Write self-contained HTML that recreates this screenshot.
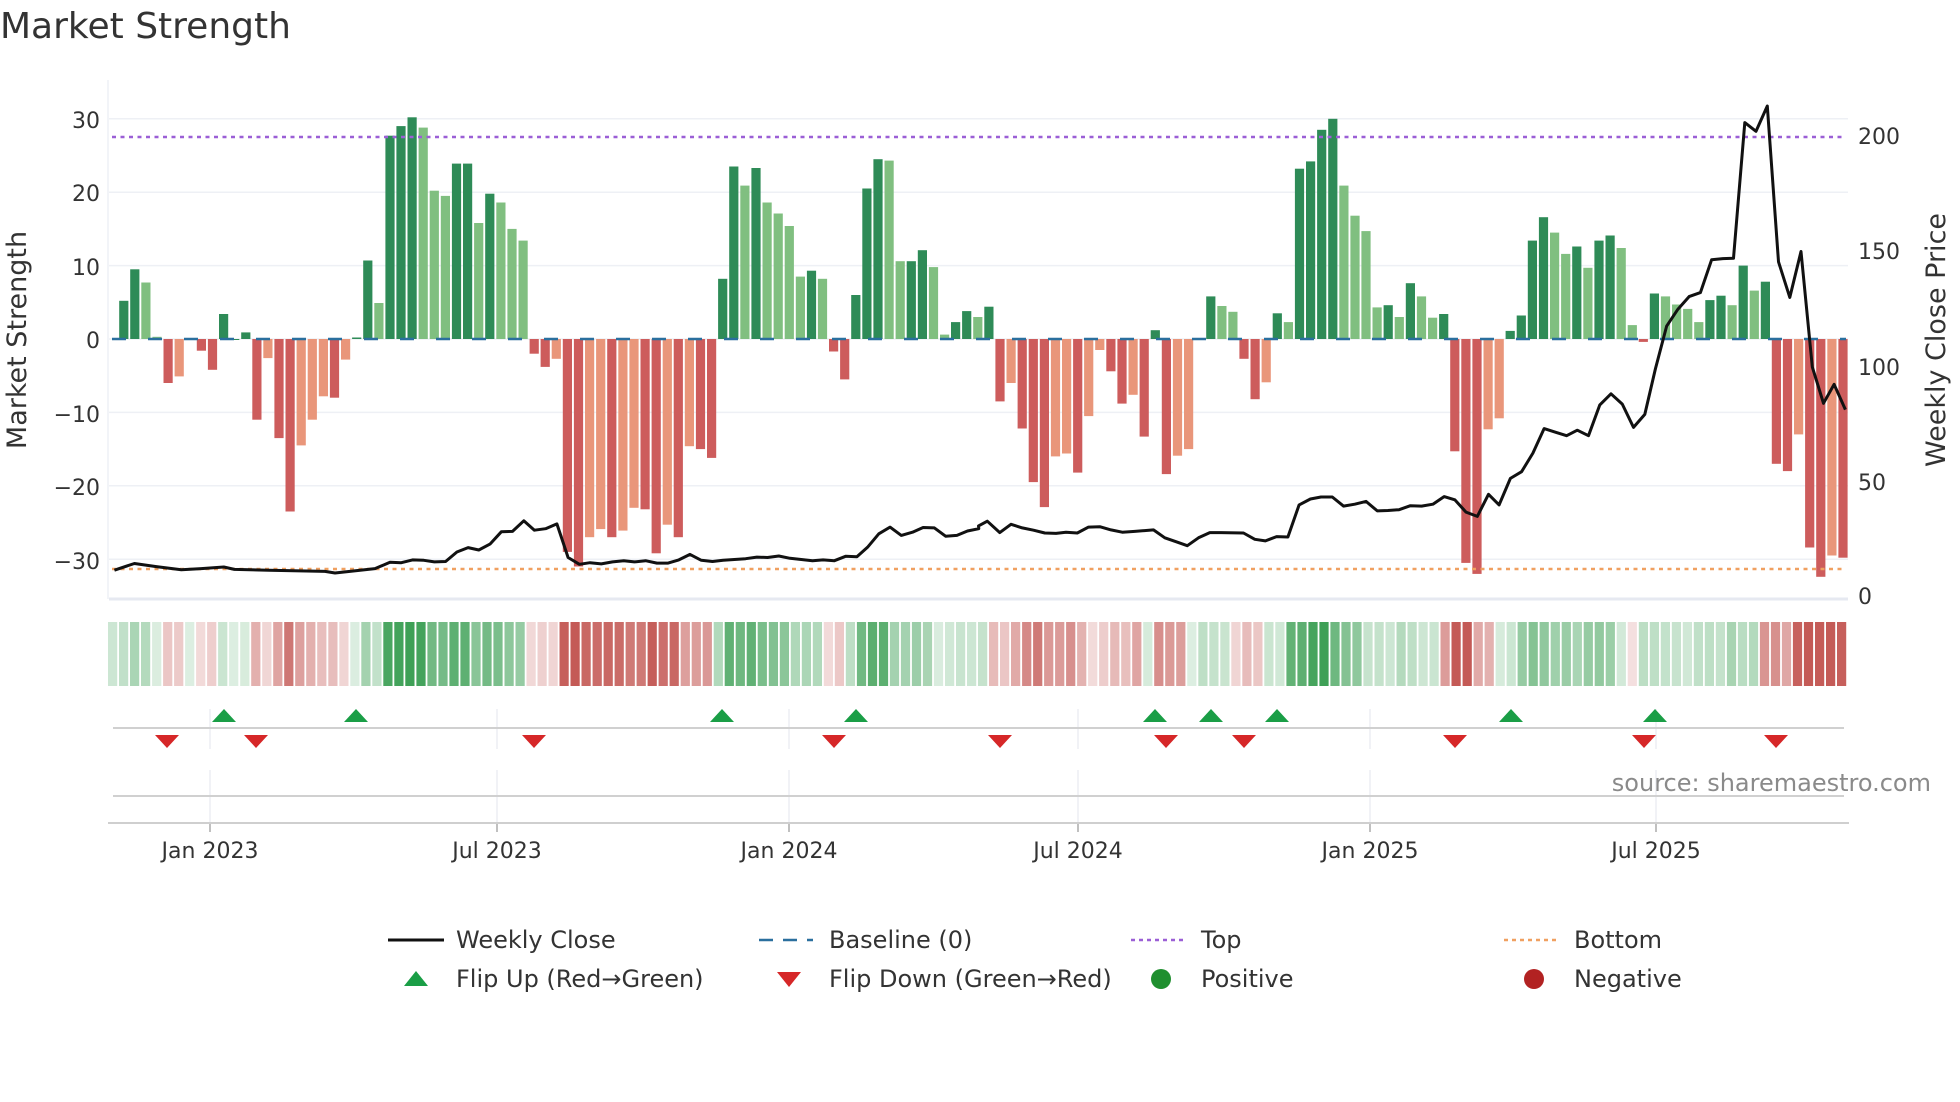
<!DOCTYPE html>
<html><head><meta charset="utf-8"><style>
html,body{margin:0;padding:0;background:#fff;width:1960px;height:1102px;overflow:hidden}
svg{display:block}
text{font-family:"DejaVu Sans","Liberation Sans",sans-serif}
</style></head><body>
<svg id="s" width="1960" height="1102" viewBox="0 0 1960 1102" xmlns="http://www.w3.org/2000/svg">
<text x="0" y="38" font-size="36" fill="#333">Market Strength</text>
<g id="grid"></g>
<g id="bars"></g>
<g id="over"></g>
<g font-size="22" fill="#333">
<text x="100" y="128" text-anchor="end">30</text>
<text x="100" y="201" text-anchor="end">20</text>
<text x="100" y="275" text-anchor="end">10</text>
<text x="100" y="348" text-anchor="end">0</text>
<text x="100" y="422" text-anchor="end">−10</text>
<text x="100" y="495" text-anchor="end">−20</text>
<text x="100" y="569" text-anchor="end">−30</text>
<text x="1858" y="144">200</text>
<text x="1858" y="259">150</text>
<text x="1858" y="375">100</text>
<text x="1858" y="490">50</text>
<text x="1858" y="604">0</text>
</g>
<text transform="translate(26,340) rotate(-90)" text-anchor="middle" font-size="27" fill="#333">Market Strength</text>
<text transform="translate(1945,340) rotate(-90)" text-anchor="middle" font-size="27" fill="#333">Weekly Close Price</text>
<g id="strip"></g>
<g id="marks"></g>
<g font-size="22" fill="#333" text-anchor="middle">
<text x="210" y="858">Jan 2023</text>
<text x="497" y="858">Jul 2023</text>
<text x="789" y="858">Jan 2024</text>
<text x="1078" y="858">Jul 2024</text>
<text x="1370" y="858">Jan 2025</text>
<text x="1656" y="858">Jul 2025</text>
</g>
<text x="1931" y="791" text-anchor="end" font-size="24" fill="#8a8a8a">source: sharemaestro.com</text>
<g font-size="24" fill="#333">
<line x1="388" y1="940" x2="444" y2="940" stroke="#111" stroke-width="3"/>
<text x="456" y="948">Weekly Close</text>
<line x1="759" y1="940" x2="813" y2="940" stroke="#2a6f9e" stroke-width="2.5" stroke-dasharray="14,10"/>
<text x="829" y="948">Baseline (0)</text>
<line x1="1131" y1="940" x2="1185" y2="940" stroke="#9b5fd6" stroke-width="2.5" stroke-dasharray="4,4"/>
<text x="1201" y="948">Top</text>
<line x1="1504" y1="940" x2="1559" y2="940" stroke="#f0a060" stroke-width="2.5" stroke-dasharray="4,4"/>
<text x="1574" y="948">Bottom</text>
<polygon points="404,986 428,986 416,971" fill="#1a9e46"/>
<text x="456" y="987">Flip Up (Red→Green)</text>
<polygon points="777,972 801,972 789,987" fill="#d62728"/>
<text x="829" y="987">Flip Down (Green→Red)</text>
<circle cx="1161" cy="979" r="10" fill="#1f8f2f"/>
<text x="1201" y="987">Positive</text>
<circle cx="1534" cy="979" r="10" fill="#b22222"/>
<text x="1574" y="987">Negative</text>
</g>
</svg>
<script>
var NS="http://www.w3.org/2000/svg";
function el(p,t,a){var e=document.createElementNS(NS,t);for(var k in a)e.setAttribute(k,a[k]);document.getElementById(p).appendChild(e);return e;}
var d1="5.2G 9.5G 7.7g 0.3g -6R -5.1r 0R -1.6R -4.2R 3.4G 0G 0.9G -11R -2.6r -13.5R -23.5R -14.5r -11r -7.8r -8R -2.8r 0.2G 10.7G 4.9g 27.7G 29G 30.2G 28.8g 20.2g 19.5g 23.9G 23.9G 15.8g 19.8G 18.6g 15g 13.4g -2R -3.8R -2.7r -29R -31R -27r -25.9r -27R -26.1r -23r -23.2R -29.2R -25.3r -27R -14.6r -15R -16.2R 8.2G 23.5G 20.9g 23.3G 18.6g 17.1g 15.4g 8.5g 9.3G 8.2g -1.7R -5.5R 6G 20.5G 24.5G 24.3g 10.6g 10.6G 12.1G 9.8g 0.6g 2.3G 3.8G 3g 4.4G -8.5R -6r -12.2R -19.5R -22.9R -16r -15.6r -18.2R -10.5r -1.5r -4.4R -8.8R -7.6r -13.3R 1.2G -18.4R -15.9r -15r 0G 5.8G 4.5g 3.7g -2.7R -8.2R -5.9r 3.5G 2.3g 23.2G 24.2G 28.5G 30G 20.9g 16.8g 14.7g 4.3g 4.6G 3g 7.6G 5.8g 2.9g 3.4G -15.3R -30.5R -32R -12.3r -10.8r 1.1G 3.2G 13.4G 16.6G 14.5g 11.6g 12.6G 9.7g 13.4G 14.1G 12.4g 1.9g -0.4R 6.2G 5.8g 4.7g 4.1g 2.3g 5.3G 5.9G 4.6g 10G 6.6g 7.8G -17R -18R -13r -28.4R -32.4R -29.5r -29.8R".split(" ");
var C={G:"#2e8b57",g:"#80bf80",R:"#cd5c5c",r:"#e9967a"};
var Y0=339,K=7.34,X0=123.75,DX=(1843-123.75)/(d1.length-1);
[30,20,10,0,-10,-20,-30].forEach(function(v){el("grid","line",{x1:109,x2:1848,y1:Y0-v*K,y2:Y0-v*K,stroke:"#eef0f5","stroke-width":1.5});});
el("grid","line",{x1:109,x2:1848,y1:599,y2:599,stroke:"#e6e9f1","stroke-width":3});
el("grid","line",{x1:108,x2:108,y1:80,y2:599,stroke:"#eef0f5","stroke-width":1.5});
var vals=[];
d1.forEach(function(s,i){var v=parseFloat(s),c=s.slice(-1);vals.push(v);var x=X0+i*DX;
 var y1=Y0-Math.max(v,0)*K,h=Math.abs(v)*K;if(h<1)h=1;
 el("bars","rect",{x:(x-4.6).toFixed(1),y:(v>=0?y1:Y0).toFixed(1),width:9.2,height:h.toFixed(1),fill:C[c]});});
el("over","line",{x1:112,x2:1846,y1:Y0,y2:Y0,stroke:"#2a6f9e","stroke-width":2.5,"stroke-dasharray":"14,22"});
el("over","line",{x1:112,x2:1846,y1:137,y2:137,stroke:"#9b5fd6","stroke-width":2.5,"stroke-dasharray":"4,4.5"});
el("over","line",{x1:112,x2:1846,y1:569,y2:569,stroke:"#f0a060","stroke-width":2.5,"stroke-dasharray":"4,4.5"});
var z1=[[183,1442],[215,1425],[250,1433],[290,1441],[322,1438],[358,1434],[375,1440],[430,1442],[520,1445],[536,1449],[600,1438],[624,1422],[642,1423],[660,1416],[678,1417],[695,1421],[713,1420],[731,1396],[749,1385],[766,1391],[784,1376],[802,1345],[820,1344],[838,1317],[855,1341],[873,1337],[891,1325],[909,1410],[927,1427],[944,1423],[962,1426],[980,1421],[998,1418],[1015,1421],[1033,1418],[1051,1424],[1069,1424],[1086,1416],[1104,1402],[1122,1417],[1140,1420],[1157,1417],[1193,1413],[1211,1409],[1228,1410],[1246,1406],[1264,1412],[1300,1418],[1317,1416],[1335,1418],[1353,1407],[1371,1408],[1388,1384],[1406,1350],[1424,1333],[1442,1354],[1460,1346],[1477,1334],[1495,1335],[1513,1356],[1531,1354],[1548,1343],[1566,1337]];
var z2=[[0,1330],[14,1318],[34,1347],[52,1326],[70,1335],[88,1341],[106,1348],[124,1349],[140,1346],[158,1348],[176,1333],[194,1332],[212,1340],[230,1346],[250,1344],[280,1340],[298,1360],[316,1370],[334,1380],[352,1360],[370,1347],[388,1347],[424,1348],[442,1364],[459,1368],[477,1357],[495,1358],[513,1277],[531,1262],[548,1257],[566,1257],[584,1280],[602,1275],[620,1268],[638,1292],[655,1291],[673,1289],[691,1279],[709,1280],[727,1275],[745,1256],[762,1264],[780,1295],[798,1306],[816,1250],[833,1277],[851,1210],[869,1193],[887,1146],[905,1084],[923,1093],[941,1102],[958,1088],[976,1102],[994,1024],[1012,996],[1030,1022],[1048,1081],[1066,1048],[1083,933],[1101,825],[1119,782],[1137,750],[1155,740],[1173,657],[1191,654],[1208,653],[1226,310],[1244,332],[1262,268],[1280,662],[1298,752],[1316,636],[1334,928],[1352,1020],[1369,972],[1387,1036]];
var pts=z1.map(function(p){return (p[0]/1.6).toFixed(1)+","+(p[1]/2.529).toFixed(1);}).concat(z2.map(function(p){return (980+p[0]/1.6-1.5).toFixed(1)+","+(p[1]/2.529).toFixed(1);}));
el("over","polyline",{points:pts.join(" "),fill:"none",stroke:"#111","stroke-width":3,"stroke-linejoin":"round"});
function mix(a,b,t){return "rgb("+[0,1,2].map(function(i){return Math.round(a[i]+(b[i]-a[i])*t);}).join(",")+")";}
var sv=[3].concat(vals,[-29]);
var SDX=(1848-108)/sv.length;
for(var i=0;i<sv.length;i++){var v=sv[i],t=0.18+0.82*Math.min(Math.abs(v)/30,1);
 var col=v>=0?mix([255,255,255],[62,160,86],t):mix([255,255,255],[196,90,86],t);
 el("strip","rect",{x:(108+i*SDX).toFixed(1),y:622,width:(SDX-1.8).toFixed(2),height:64,fill:col});}
[210,497,789,1078,1370,1656].forEach(function(x){
 el("marks","line",{x1:x,x2:x,y1:709,y2:749,stroke:"#eceef3","stroke-width":1.5});
 el("marks","line",{x1:x,x2:x,y1:770,y2:823,stroke:"#eceef3","stroke-width":1.5});
 el("marks","line",{x1:x,x2:x,y1:823,y2:832,stroke:"#aaa","stroke-width":1.5});});
el("marks","line",{x1:113,x2:1844,y1:728,y2:728,stroke:"#d0d0d0","stroke-width":2});
el("marks","line",{x1:113,x2:1844,y1:796,y2:796,stroke:"#d0d0d0","stroke-width":2});
el("marks","line",{x1:108,x2:1849,y1:823,y2:823,stroke:"#cfcfcf","stroke-width":2});
[224,356,722,856,1155,1211,1277,1511,1655].forEach(function(x){el("marks","polygon",{points:(x-12)+",722 "+(x+12)+",722 "+x+",709",fill:"#1a9e46"});});
[167,256,534,834,1000,1166,1244,1455,1644,1776].forEach(function(x){el("marks","polygon",{points:(x-12)+",735 "+(x+12)+",735 "+x+",748",fill:"#d62728"});});
</script>
</body></html>
